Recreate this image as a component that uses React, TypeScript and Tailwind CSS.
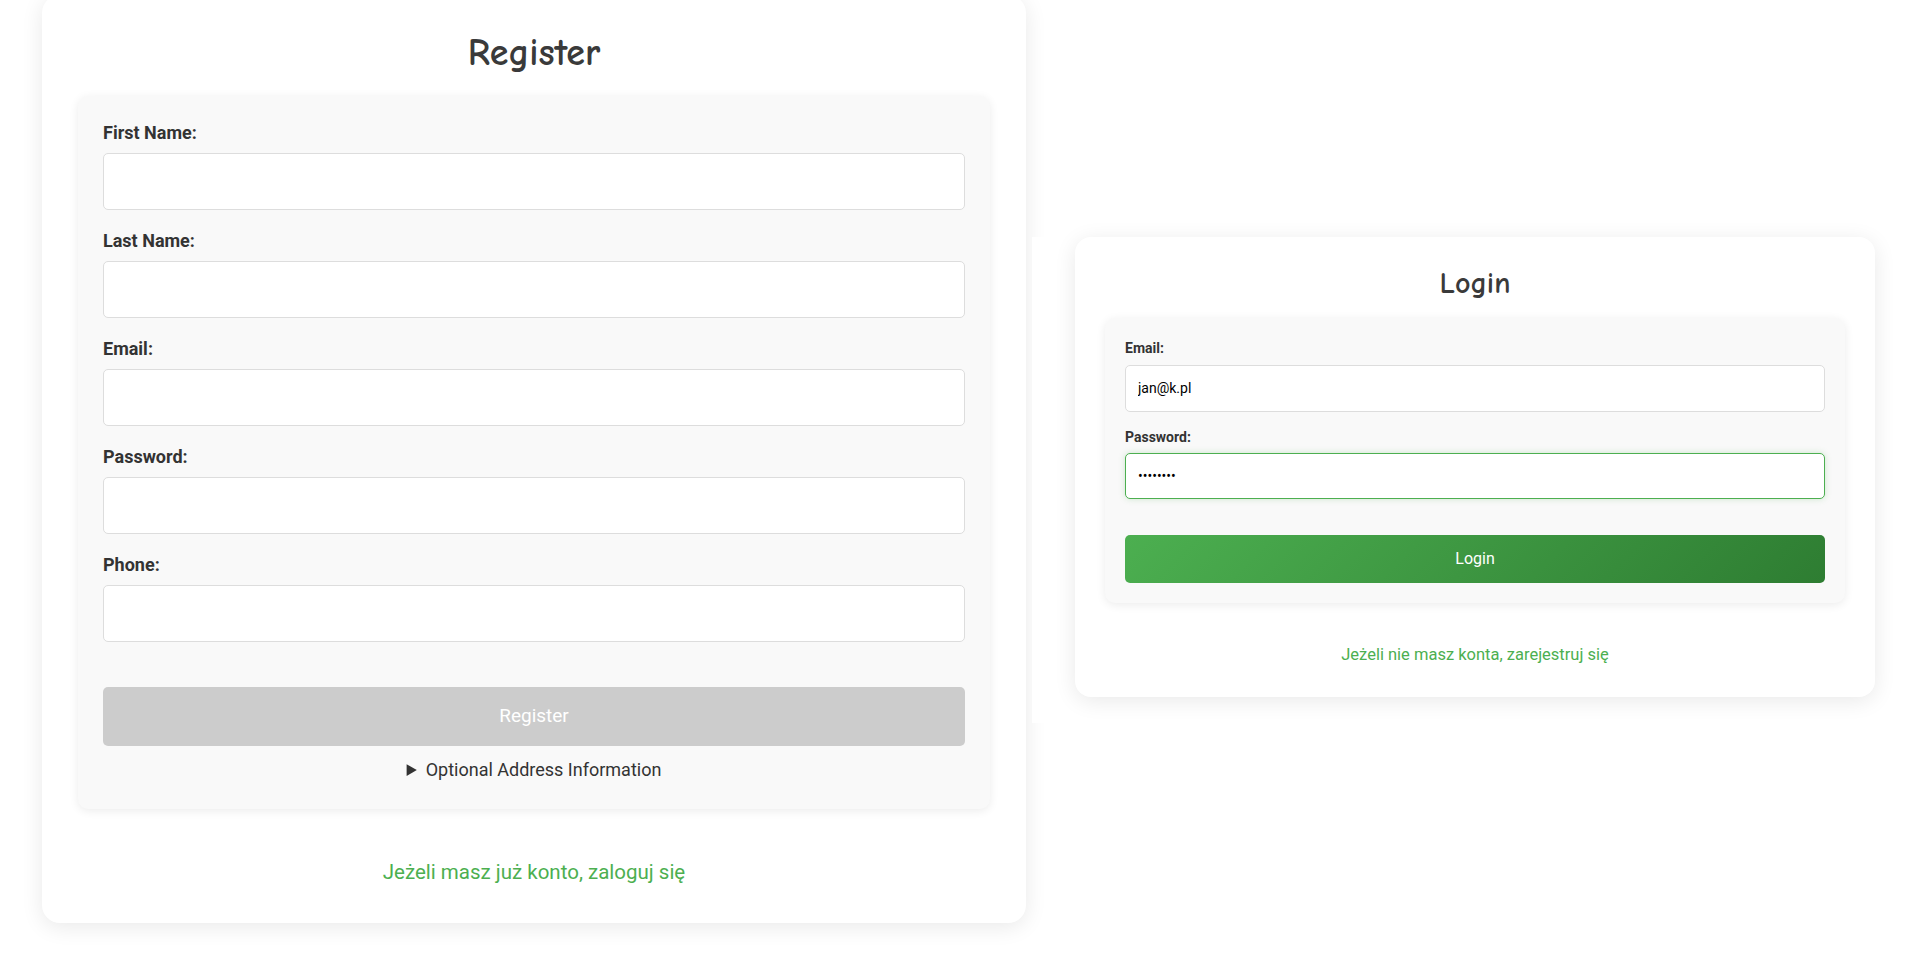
import { useState } from 'react';

interface FieldProps {
  label: string;
  type?: string;
}

const RegisterField = ({ label, type = 'text' }: FieldProps) => (
  <div className="mb-[21px]">
    <label className="mb-[10px] block text-[18px] font-bold leading-[20px] text-[#333]">{label}</label>
    <input
      type={type}
      className="block h-[57px] w-full rounded-[5px] border border-[#ddd] bg-white px-[14px] text-[16px] outline-none"
    />
  </div>
);

const RegisterCard = () => (
  <div className="h-[928px] w-[984px] rounded-[18px] bg-white px-[36px] pt-[34px] shadow-[0_4px_22px_rgba(0,0,0,0.09)]">
    <h2 className="mb-[19px] h-[48px] text-center font-['Comic_Sans_MS','Comic_Neue',cursive] text-[38px] font-bold leading-[48px] text-[#3a3a3a]">
      Register
    </h2>

    {/* Form box */}
    <form className="rounded-[10px] bg-[#f9f9f9] px-[25px] pb-[29px] pt-[27px] shadow-[0_2px_10px_rgba(0,0,0,0.08)]">
      <RegisterField label="First Name:" />
      <RegisterField label="Last Name:" />
      <RegisterField label="Email:" type="email" />
      <RegisterField label="Password:" type="password" />
      <RegisterField label="Phone:" type="tel" />

      {/* margin collapses with the field's mb-[21px] */}
      <button
        type="button"
        disabled
        className="mt-[45px] block h-[59px] w-full rounded-[5px] bg-[#ccc] text-[19px] text-white"
      >
        Register
      </button>

      <details className="mt-[13px] text-center text-[18px] leading-[21px] text-[#333]">
        <summary className="cursor-pointer">Optional Address Information</summary>
      </details>
    </form>

    <p className="mt-[51px] text-center text-[20.5px] leading-[24px] text-[#4caf50]">Jeżeli masz już konto, zaloguj się</p>
  </div>
);

const LoginCard = () => {
  const [email, setEmail] = useState('jan@k.pl');
  const [password, setPassword] = useState('12345678');

  return (
    <div className="h-[460px] rounded-[16px] bg-white px-[30px] pt-[27px] shadow-[0_4px_22px_rgba(0,0,0,0.09)]">
      <h2 className="mb-[14px] h-[40px] text-center font-['Comic_Sans_MS','Comic_Neue',cursive] text-[30px] font-bold leading-[40px] text-[#3a3a3a]">
        Login
      </h2>

      <form className="rounded-[10px] bg-[#f9f9f9] px-[20px] pb-[20px] pt-[22px] shadow-[0_2px_10px_rgba(0,0,0,0.08)]">
        <label className="mb-[8px] block text-[14px] font-bold leading-[17px] text-[#333]">Email:</label>
        <input
          type="email"
          value={email}
          onChange={(e) => setEmail(e.target.value)}
          className="mb-[17px] block h-[47px] w-full rounded-[5px] border border-[#ddd] bg-white px-[12px] text-[14px] text-black outline-none"
        />

        <label className="mb-[7px] block text-[14px] font-bold leading-[17px] text-[#333]">Password:</label>
        <input
          type="password"
          value={password}
          autoFocus
          onChange={(e) => setPassword(e.target.value)}
          className="block h-[46px] w-full rounded-[5px] border border-[#4caf50] bg-white px-[12px] text-[14px] text-black shadow-[0_0_6px_rgba(76,175,80,0.25)] outline-none"
        />

        <button
          type="button"
          className="mt-[36px] block h-[48px] w-full rounded-[5px] bg-[linear-gradient(135deg,#4caf50,#2e7d32)] text-[16px] text-white"
        >
          Login
        </button>
      </form>

      <p className="mt-[42px] text-center text-[16.5px] leading-[20px] text-[#4caf50]">Jeżeli nie masz konta, zarejestruj się</p>
    </div>
  );
};

export default function App() {
  return (
    <div className="flex h-screen items-center overflow-hidden bg-white font-['Roboto',sans-serif]">
      <div className="shrink-0 pb-[41px] pl-[42px]">
        <RegisterCard />
      </div>

      {/* Login column */}
      <div className="ml-[6px] flex-1 bg-white px-[43px] pb-[26px]">
        <LoginCard />
      </div>
    </div>
  );
}
